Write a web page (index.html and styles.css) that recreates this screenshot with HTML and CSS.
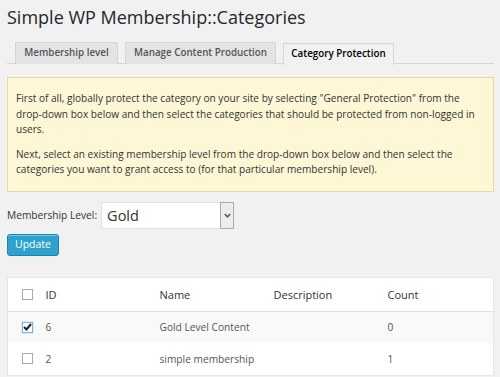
FILE: index.html
```html
<!DOCTYPE html>
<html lang="en">
<head>
  <meta charset="UTF-8" />
  <title>Simple WP Membership::Categories</title>
  <link rel="stylesheet" href="styles.css">
</head>
<body>
  <div class="wrap">
    <h1>Simple WP Membership::Categories</h1>

    <!-- Tabs -->
    <div class="nav-tabs">
      <span class="nav-tab">Membership level</span>
      <span class="nav-tab">Manage Content Production</span>
      <span class="nav-tab active">Category Protection</span>
    </div>

    <!-- Notice -->
    <div class="notice">
      <p>First of all, globally protect the category on your site by selecting "General Protection" from the drop-down box below and then select the categories that should be protected from non-logged in users.</p>
      <p>Next, select an existing membership level from the drop-down box below and then select the categories you want to grant access to (for that particular membership level).</p>
    </div>

    <div class="level-row">
      <label>Membership Level:</label>
      <div class="select-box">
        <span class="select-value">Gold</span>
        <span class="select-arrow">
          <svg width="7" height="5" viewBox="0 0 7 5"><path d="M0.8 1 L3.5 3.8 L6.2 1" fill="none" stroke="#555" stroke-width="1.5"/></svg>
        </span>
      </div>
    </div>

    <button class="btn-primary">Update</button>

    <!-- Categories table -->
    <table class="cat-table">
      <colgroup>
        <col class="col-cb">
        <col><col><col><col>
      </colgroup>
      <thead>
        <tr>
          <th><span class="cb"></span></th>
          <th>ID</th>
          <th>Name</th>
          <th>Description</th>
          <th>Count</th>
        </tr>
      </thead>
      <tbody>
        <tr class="alt">
          <td><span class="cb checked"><svg width="9" height="8" viewBox="0 0 9 8"><path d="M1 4 L3.5 6.5 L8 1" fill="none" stroke="#1e1e1e" stroke-width="2"/></svg></span></td>
          <td>6</td>
          <td>Gold Level Content</td>
          <td></td>
          <td>0</td>
        </tr>
        <tr>
          <td><span class="cb"></span></td>
          <td>2</td>
          <td>simple membership</td>
          <td></td>
          <td>1</td>
        </tr>
      </tbody>
    </table>
  </div>
</body>
</html>
```

FILE: styles.css
```css
* {
  box-sizing: border-box;
}
body {
  margin: 0;
  background: #f1f1f1;
  font-family: 'Open Sans', sans-serif;
  font-size: 10.2px;
  color: #444;
  overflow: hidden;
}

.wrap {
  padding: 0 6px 0 7px;
}

h1 {
  margin: 0;
  padding: 5px 0 0 0;
  font-size: 18px;
  font-weight: 400;
  line-height: 24px;
  color: #23282d;
}

/* Tabs */
.nav-tabs {
  display: flex;
  gap: 7px;
  margin-top: 13px;
  padding-left: 8px;
  border-bottom: 1px solid #d6d6d6;
  height: 22px;
}
.nav-tab {
  display: block;
  height: 22px;
  line-height: 20px;
  font-size: 9.8px;
  font-weight: 600;
  color: #555;
  background: #e4e4e4;
  border: 1px solid #d6d6d6;
  border-bottom: none;
  text-align: center;
}
.nav-tab:nth-child(1) {
  width: 103px;
}
.nav-tab:nth-child(2) {
  width: 151px;
}
.nav-tab.active {
  width: 111px;
  color: #000;
  background: #f1f1f1;
  position: relative;
  top: 1px;
}

/* Notice */
.notice {
  margin-top: 13px;
  background: #fef7d6;
  border: 1px solid #e6db9c;
  padding: 7px 8px 7px 8px;
  color: #333;
  font-size: 10.1px;
}
.notice p {
  margin: 6px 0;
  line-height: 15.5px;
}
.notice p + p {
  margin-top: 9px;
}

/* Level select */
.level-row {
  display: flex;
  align-items: center;
  gap: 4px;
  margin-top: 10px;
}
.level-row label {
  color: #333;
}
.select-box {
  display: flex;
  width: 133px;
  height: 27px;
  background: #fff;
  border: 1px solid #e1e1e1;
}
.select-value {
  flex: 1;
  padding-left: 5px;
  font-size: 14.5px;
  line-height: 25px;
  color: #333;
}
.select-arrow {
  width: 14px;
  display: flex;
  align-items: center;
  justify-content: center;
  background: #ececec;
  border: 1px solid #aaa;
  margin: -1px -1px -1px 0;
}

.btn-primary {
  display: block;
  margin-top: 5px;
  width: 52px;
  height: 22px;
  padding: 0;
  background: #2ea2cc;
  border: 1px solid #0f86b4;
  border-radius: 3px;
  color: #fff;
  font-family: 'Open Sans', sans-serif;
  font-size: 10.5px;
  line-height: 19px;
  box-shadow: inset 0 1px 0 #78c8e6;
}

/* Table */
.cat-table {
  margin-top: 21px;
  width: 487px;
  border-collapse: collapse;
  table-layout: fixed;
  background: #fff;
  border: 1px solid #e5e5e5;
  color: #555;
}
.col-cb {
  width: 30px;
}
.cat-table th,
.cat-table td {
  text-align: left;
  font-weight: 400;
  padding: 0 0 0 8px;
  vertical-align: middle;
}
.cat-table th {
  height: 34px;
  font-size: 11px;
  color: #333;
  border-bottom: 1px solid #e1e1e1;
}
.cat-table td {
  height: 32px;
  font-size: 10.2px;
}
.cat-table th:first-child,
.cat-table td:first-child {
  padding-left: 14px;
}
.cat-table tr.alt {
  background: #f9f9f9;
}

.cb {
  display: flex;
  align-items: center;
  justify-content: center;
  width: 11px;
  height: 11px;
  border: 1px solid #aaa;
  background: #fff;
}
.cb.checked {
  border-color: #7eb3d8;
  box-shadow: 0 0 1px #5b9dd9;
}
```
